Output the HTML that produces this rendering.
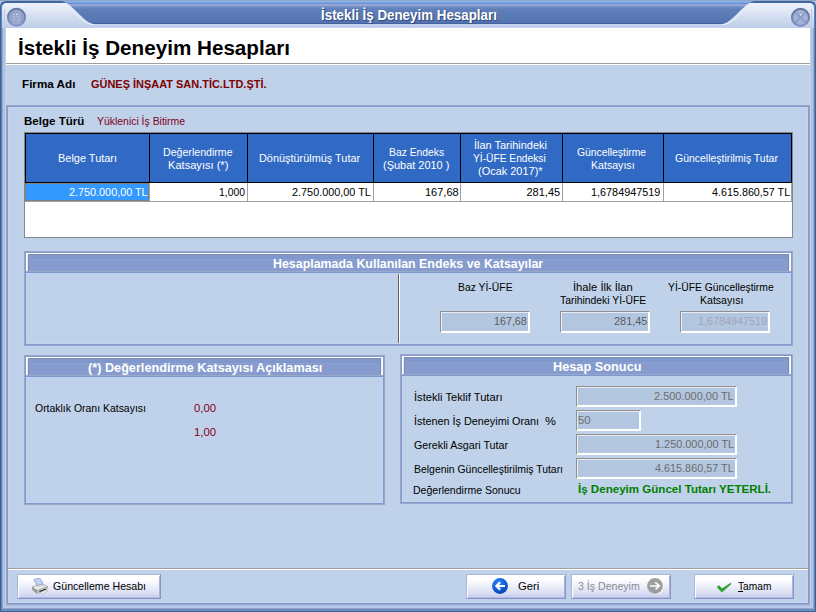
<!DOCTYPE html>
<html><head><meta charset="utf-8"><title>İstekli İş Deneyim Hesapları</title>
<style>
html,body{margin:0;padding:0}
body{width:816px;height:612px;position:relative;overflow:hidden;background:#bfd2e9;font-family:"Liberation Sans",sans-serif}
div,span,svg{position:absolute;box-sizing:border-box}
.t{white-space:pre;transform-origin:0 0;display:block}
.fr{border:1px solid #9aa7ca}
.fr>i{position:absolute;left:0;top:0;right:0;bottom:0;border:1px solid #8099cf;display:block;box-shadow:inset 0 0 0 1px #c4d6ed}
.ph{background:linear-gradient(#8198cc 0,#8198cc 5px,#8ca1d1 5px,#8ca1d1 6px,#869cce 6px);border:1px solid #fff;border-bottom:none;box-shadow:inset 1px 0 0 #e6ebf6,inset -1px 0 0 #e6ebf6,inset 2px 1px 0 #7e8cb4,inset -2px 0 0 #7e8cb4}
.pl{height:2px;background:#7d97cf;border-top:1px solid #9ba8c7}
.ed{background:#b3c6e0;border:1px solid;border-color:#909090 #fff #fff #909090;box-shadow:inset 1px 1px 0 #e6ebf4, inset -1px -1px 0 #fff}
.btn{border:1px solid #a9b7d3;border-right-color:#8a95c8;border-bottom-color:#8591c5;background:linear-gradient(#ffffff 0%,#fdfdff 20%,#eceef9 52%,#d9ddf3 80%,#c8ceee 96%,#9fa9d7 100%);box-shadow:inset 1px 1px 0 #fff, inset -1px 0 0 #aab3dc}
.hc{background:#316ac5;border:1px solid #000;top:133px;height:50px}
.gc{top:183px;height:19px;border-right:1px solid #a0a0a0;border-bottom:1px solid #a0a0a0;background:#fff}

</style></head>
<body>
<!-- title bar -->
<svg width="816" height="28" style="left:0;top:0" viewBox="0 0 816 28">
 <defs>
  <linearGradient id="tl" x1="0" y1="0" x2="0" y2="1"><stop offset="0" stop-color="#eef2fa"/><stop offset="0.35" stop-color="#dfe6f5"/><stop offset="1" stop-color="#bccde9"/></linearGradient>
  <linearGradient id="td" gradientUnits="userSpaceOnUse" x1="0" y1="1" x2="0" y2="24">
   <stop offset="0" stop-color="#8ab4ea"/><stop offset="0.043" stop-color="#8ab4ea"/>
   <stop offset="0.065" stop-color="#7ba3de"/><stop offset="0.11" stop-color="#6f93d0"/>
   <stop offset="0.14" stop-color="#8da4d6"/><stop offset="0.20" stop-color="#94a8d8"/>
   <stop offset="0.24" stop-color="#7690c8"/><stop offset="0.30" stop-color="#6785c0"/>
   <stop offset="0.36" stop-color="#5f7fba"/><stop offset="0.93" stop-color="#5575b0"/>
   <stop offset="0.96" stop-color="#4a66a6"/><stop offset="1" stop-color="#3f5a9c"/>
  </linearGradient>
  <linearGradient id="tb" x1="0" y1="0" x2="0" y2="1"><stop offset="0" stop-color="#cad3f0"/><stop offset="0.8" stop-color="#bfc9ea"/><stop offset="1" stop-color="#d8def2"/></linearGradient>
 </defs>
 <rect x="0" y="0" width="816" height="28" fill="#b4c2d8"/>
 <path d="M0 28 V7 Q0 1 6 1 H810 Q816 1 816 7 V28 Z" fill="#3f679f"/>
 <path d="M1 28 V8 Q1 3 6 3 H810 Q815 3 815 8 V28 Z" fill="#6585b9"/>
 <path d="M2 28 V8 Q2 3 7 3 H809 Q814 3 814 8 V28 Z" fill="url(#tl)"/>
 <path d="M4.5 9 V28 M811.5 9 V28" stroke="#c0cbe3" stroke-width="1" fill="none"/>
 <rect x="90" y="24" width="636" height="4" fill="url(#tb)"/>
 <rect x="0" y="0" width="816" height="1" fill="#8fa6c9"/>
 <path d="M61 1 H755 C746 1 731 24 722 24 H94 C85 24 70 1 61 1 Z" fill="url(#td)"/>
 <path d="M67 4.6 C73 9 83 24.7 94 24.7 M749 4.6 C743 9 733 24.7 722 24.7" fill="none" stroke="#e9edf8" stroke-width="1.1"/>
 <!-- left icon -->
 <linearGradient id="rg" x1="0" y1="0" x2="0" y2="1"><stop offset="0" stop-color="#606f95"/><stop offset="1" stop-color="#7f95ca"/></linearGradient>
 <circle cx="16.5" cy="17.2" r="8.6" fill="#95a4cc" stroke="url(#rg)" stroke-width="1.8"/>
 <circle cx="16.5" cy="17.2" r="7.2" fill="none" stroke="#8d9bc2" stroke-width="0.9"/>
 <rect x="13" y="13.8" width="7" height="7.4" fill="#aab7db"/><rect x="16" y="13.9" width="1.2" height="1" fill="#fff"/>
 <path d="M14 15.5h5M14 17.5h5M14 19.5h5" stroke="#8f9dc7" stroke-width="1"/>
 <path d="M12.5 22.6 Q16.5 24.6 20.5 22.6" stroke="#a9b6da" stroke-width="0.8" fill="none"/>
 <!-- close -->
 <circle cx="800.5" cy="17.4" r="8.5" fill="#a3b1d8" stroke="#7684aa" stroke-width="1.7"/>
 <path d="M795 12 L806 23 M806 12 L795 23" stroke="#8b99c4" stroke-width="1.7"/>
 <circle cx="800.5" cy="17.4" r="8.5" fill="none" stroke="url(#rg)" stroke-width="1.8"/>
 <rect x="800" y="14.2" width="1.2" height="1.2" fill="#fff"/>
</svg>
<!-- window side/bottom borders -->
<div style="left:0;top:28px;width:816px;height:584px;border:1px solid #3a6399;border-top:none"></div>
<div style="left:1px;top:28px;width:814px;height:583px;border:1px solid #5f80b5;border-top:none;border-bottom:2px solid #6a8dc1"></div>
<div style="left:2px;top:28px;width:812px;height:581px;border:1px solid #99a8c8;border-top:none;border-bottom-color:#93a4c6"></div>
<div style="left:3px;top:28px;width:810px;height:580px;border:1px solid #b5c8ec;border-top:none;border-bottom:2px solid #b8c9ec"></div>
<div style="left:4px;top:28px;width:808px;height:578px;border:1px solid #b0beda;border-top:none"></div>
<!-- white header -->
<div style="left:6px;top:28px;width:804px;height:35px;background:#fff"></div>
<div style="left:6px;top:63px;width:804px;height:1px;background:#9e9e9e"></div>
<div style="left:6px;top:64px;width:804px;height:1px;background:#fff"></div>
<!-- main group frame -->
<div class="fr" style="left:6px;top:105px;width:804px;height:500px"><i></i></div>
<!-- grid -->
<div style="left:24px;top:132px;width:769px;height:106px;background:#fff;border:1px solid #828790"></div>
<div class="hc" style="left:25px;width:125px"></div>
<div class="hc" style="left:149px;width:99px"></div>
<div class="hc" style="left:247px;width:127px"></div>
<div class="hc" style="left:373px;width:88px"></div>
<div class="hc" style="left:460px;width:103px"></div>
<div class="hc" style="left:562px;width:102px"></div>
<div class="hc" style="left:663px;width:129px"></div>
<div class="gc" style="left:25px;width:125px"></div>
<div style="left:25px;top:183px;width:124px;height:18px;background:#3399ff;border:1px dotted #cc6600"></div>
<div class="gc" style="left:150px;width:98px"></div>
<div class="gc" style="left:248px;width:126px"></div>
<div class="gc" style="left:374px;width:87px"></div>
<div class="gc" style="left:461px;width:102px"></div>
<div class="gc" style="left:563px;width:101px"></div>
<div class="gc" style="left:664px;width:128px"></div>
<!-- panel 1 -->
<div class="fr" style="left:24px;top:251px;width:769px;height:95px"><i></i></div>
<div class="ph" style="left:26px;top:253px;width:765px;height:18px"></div>
<div class="pl" style="left:26px;top:271px;width:765px"></div>
<div style="left:398px;top:274px;width:1px;height:69px;background:#606060"></div>
<div style="left:399px;top:274px;width:1px;height:69px;background:#fff"></div>
<div class="ed" style="left:440px;top:311px;width:90px;height:22px"></div>
<div class="ed" style="left:560px;top:311px;width:90px;height:22px"></div>
<div class="ed" style="left:680px;top:311px;width:90px;height:22px"></div>
<!-- panel 2 -->
<div class="fr" style="left:24px;top:355px;width:361px;height:150px"><i></i></div>
<div class="ph" style="left:26px;top:357px;width:357px;height:18px"></div>
<div class="pl" style="left:26px;top:375px;width:357px"></div>
<!-- panel 3 -->
<div class="fr" style="left:400px;top:354px;width:393px;height:150px"><i></i></div>
<div class="ph" style="left:402px;top:356px;width:389px;height:18px"></div>
<div class="pl" style="left:402px;top:374px;width:389px"></div>
<div class="ed" style="left:576px;top:386px;width:161px;height:21px"></div>
<div class="ed" style="left:576px;top:410px;width:65px;height:21px"></div>
<div class="ed" style="left:576px;top:434px;width:161px;height:21px"></div>
<div class="ed" style="left:576px;top:458px;width:161px;height:21px"></div>
<!-- bottom separator -->
<div style="left:8px;top:568px;width:800px;height:1px;background:#a0a0a0"></div>
<div style="left:8px;top:569px;width:800px;height:1px;background:#fff"></div>
<!-- buttons -->
<div class="btn" style="left:17px;top:574px;width:144px;height:25px"></div>
<div class="btn" style="left:466px;top:574px;width:100px;height:25px"></div>
<div class="btn" style="left:571px;top:574px;width:100px;height:25px"></div>
<div class="btn" style="left:694px;top:574px;width:100px;height:25px"></div>
<!-- printer icon -->
<svg width="16" height="16" viewBox="0 0 16 16" style="left:32px;top:578px">
 <polygon points="2,1.6 5.8,0.4 8.2,0.4 9,2.6 10,3 10.8,6.4 4.6,8.2 3.6,4 2.6,3.6" fill="#b9d6f5" stroke="#9a9be0" stroke-width="0.8"/>
 <polygon points="0.4,9.2 4.2,7.6 10.8,6.2 15.6,8.6 5,12.6" fill="#eeeeee" stroke="#8e8e8e" stroke-width="0.7"/>
 <polygon points="4.6,8.2 10.6,6.6 12.4,7.6 6,9.4" fill="#cfd3dc"/>
 <polygon points="0.4,9.2 5,12.6 5,15.6 0.4,11.8" fill="#a2a2a2" stroke="#808080" stroke-width="0.5"/>
 <polygon points="5,12.6 15.6,8.6 15.6,11 5,15.6" fill="#d2d2d2" stroke="#8e8e8e" stroke-width="0.5"/>
 <polygon points="7.4,12.9 14,10.4 14,11.6 7.4,14.2" fill="#111"/>
 <polygon points="8.2,14.4 13,12.4 15.8,13.4 10.6,15.7" fill="#f2f2f2" stroke="#a8a8a8" stroke-width="0.5"/>
</svg>
<!-- back icon -->
<svg width="16" height="16" viewBox="0 0 16 16" style="left:492px;top:578px">
 <defs><radialGradient id="bk" cx="0.4" cy="0.3" r="0.75"><stop offset="0" stop-color="#2f86f2"/><stop offset="0.6" stop-color="#0b5fdc"/><stop offset="1" stop-color="#083c9e"/></radialGradient></defs>
 <circle cx="8" cy="8" r="7.9" fill="url(#bk)"/>
 <path d="M2.8 7.9 L7.4 3.6 L8.9 5.1 L7.1 6.9 H13 V9.1 H7.1 L8.9 10.9 L7.4 12.4 Z" fill="#fff"/>
</svg>
<!-- next icon (disabled) -->
<svg width="17" height="17" viewBox="0 0 17 17" style="left:647px;top:578px">
 <circle cx="8.6" cy="8.6" r="7.9" fill="#fff"/>
 <circle cx="8" cy="8" r="7.9" fill="#9e9e9e"/>
 <path d="M3 7.9 H12.4 M8.2 4.4 L12.4 7.9 L8.6 11.4" fill="none" stroke="#fff" stroke-width="1.5"/>
</svg>
<!-- check icon -->
<svg width="16" height="12" viewBox="0 0 16 12" style="left:716px;top:582px">
 <path d="M1.2 5.3 L2.8 3.6 L6 6.8 L14.4 1.3 L15.2 1.7 L6.4 9.8 L5.5 9.8 Z" fill="#27ad27" stroke="#0f7f0f" stroke-width="0.5"/>
</svg>

<span class="t" style="left:321.05px;top:8px;font:700 14px/14px 'Liberation Sans', sans-serif;color:#fff;transform:scaleX(0.9536);text-shadow:1px 1px 1px #2a4478;">İstekli İş Deneyim Hesapları</span>
<span class="t" style="left:17.97px;top:38px;font:700 20px/20px 'Liberation Sans', sans-serif;color:#000;transform:scaleX(1.0322);">İstekli İş Deneyim Hesapları</span>
<span class="t" style="left:22.24px;top:79px;font:700 11px/11px 'Liberation Sans', sans-serif;color:#000;transform:scaleX(1.0612);">Firma Adı</span>
<span class="t" style="left:91.20px;top:79px;font:700 11px/11px 'Liberation Sans', sans-serif;color:#800000;transform:scaleX(0.9960);">GÜNEŞ İNŞAAT SAN.TİC.LTD.ŞTİ.</span>
<span class="t" style="left:24.15px;top:116px;font:700 11px/11px 'Liberation Sans', sans-serif;color:#000;transform:scaleX(1.0500);">Belge Türü</span>
<span class="t" style="left:97.05px;top:116px;font:400 11px/11px 'Liberation Sans', sans-serif;color:#800020;transform:scaleX(0.9478);">Yüklenici İş Bitirme</span>
<span class="t" style="left:57.75px;top:153px;font:400 11px/11px 'Liberation Sans', sans-serif;color:#fff;transform:scaleX(0.9956);">Belge Tutarı</span>
<span class="t" style="left:162.79px;top:147px;font:400 11px/11px 'Liberation Sans', sans-serif;color:#fff;transform:scaleX(0.9648);">Değerlendirme</span>
<span class="t" style="left:167.79px;top:160px;font:400 11px/11px 'Liberation Sans', sans-serif;color:#fff;transform:scaleX(1.0078);">Katsayısı (*)</span>
<span class="t" style="left:258.51px;top:153px;font:400 11px/11px 'Liberation Sans', sans-serif;color:#fff;transform:scaleX(0.9901);">Dönüştürülmüş Tutar</span>
<span class="t" style="left:388.56px;top:147px;font:400 11px/11px 'Liberation Sans', sans-serif;color:#fff;transform:scaleX(0.9386);">Baz Endeks</span>
<span class="t" style="left:383.00px;top:160px;font:400 11px/11px 'Liberation Sans', sans-serif;color:#fff;transform:scaleX(0.9962);">(Şubat 2010 )</span>
<span class="t" style="left:473.50px;top:140px;font:400 11px/11px 'Liberation Sans', sans-serif;color:#fff;transform:scaleX(0.9965);">İlan Tarihindeki</span>
<span class="t" style="left:473.07px;top:153px;font:400 11px/11px 'Liberation Sans', sans-serif;color:#fff;transform:scaleX(0.9286);">Yİ-ÜFE Endeksi</span>
<span class="t" style="left:478.25px;top:166px;font:400 11px/11px 'Liberation Sans', sans-serif;color:#fff;transform:scaleX(0.9961);">(Ocak 2017)*</span>
<span class="t" style="left:577.06px;top:147px;font:400 11px/11px 'Liberation Sans', sans-serif;color:#fff;transform:scaleX(0.9410);">Güncelleştirme</span>
<span class="t" style="left:590.79px;top:160px;font:400 11px/11px 'Liberation Sans', sans-serif;color:#fff;transform:scaleX(0.9640);">Katsayısı</span>
<span class="t" style="left:674.80px;top:153px;font:400 11px/11px 'Liberation Sans', sans-serif;color:#fff;transform:scaleX(0.9509);">Güncelleştirilmiş Tutar</span>
<span class="t" style="left:68.52px;top:187px;font:400 11px/11px 'Liberation Sans', sans-serif;color:#fff;transform:scaleX(0.9840);">2.750.000,00 TL</span>
<span class="t" style="left:218.56px;top:187px;font:400 11px/11px 'Liberation Sans', sans-serif;color:#000;transform:scaleX(0.9423);">1,000</span>
<span class="t" style="left:292.26px;top:187px;font:400 11px/11px 'Liberation Sans', sans-serif;color:#000;transform:scaleX(0.9872);">2.750.000,00 TL</span>
<span class="t" style="left:425.00px;top:187px;font:400 11px/11px 'Liberation Sans', sans-serif;color:#000;transform:scaleX(1.0000);">167,68</span>
<span class="t" style="left:526.50px;top:187px;font:400 11px/11px 'Liberation Sans', sans-serif;color:#000;transform:scaleX(1.0000);">281,45</span>
<span class="t" style="left:591.26px;top:187px;font:400 11px/11px 'Liberation Sans', sans-serif;color:#000;transform:scaleX(0.9855);">1,6784947519</span>
<span class="t" style="left:711.50px;top:187px;font:400 11px/11px 'Liberation Sans', sans-serif;color:#000;transform:scaleX(0.9778);">4.615.860,57 TL</span>
<span class="t" style="left:272.80px;top:257px;font:700 13px/13px 'Liberation Sans', sans-serif;color:#fff;transform:scaleX(0.9539);">Hesaplamada Kullanılan Endeks ve Katsayılar</span>
<span class="t" style="left:458.46px;top:282px;font:400 11px/11px 'Liberation Sans', sans-serif;color:#000;transform:scaleX(0.9429);">Baz Yİ-ÜFE</span>
<span class="t" style="left:572.98px;top:282px;font:400 11px/11px 'Liberation Sans', sans-serif;color:#000;transform:scaleX(1.0175);">İhale İlk İlan</span>
<span class="t" style="left:560.25px;top:295px;font:400 11px/11px 'Liberation Sans', sans-serif;color:#000;transform:scaleX(0.9423);">Tarihindeki Yİ-ÜFE</span>
<span class="t" style="left:668.06px;top:282px;font:400 11px/11px 'Liberation Sans', sans-serif;color:#000;transform:scaleX(0.9392);">Yİ-ÜFE Güncelleştirme</span>
<span class="t" style="left:699.79px;top:295px;font:400 11px/11px 'Liberation Sans', sans-serif;color:#000;transform:scaleX(0.9593);">Katsayısı</span>
<span class="t" style="left:494.42px;top:316px;font:400 11px/11px 'Liberation Sans', sans-serif;color:#5a5a5a;transform:scaleX(0.9750);">167,68</span>
<span class="t" style="left:613.81px;top:316px;font:400 11px/11px 'Liberation Sans', sans-serif;color:#5a5a5a;transform:scaleX(0.9938);">281,45</span>
<span class="t" style="left:697.77px;top:316px;font:400 11px/11px 'Liberation Sans', sans-serif;color:#9ca6b8;transform:scaleX(0.9819);">1,6784947519</span>
<span class="t" style="left:87.52px;top:361px;font:700 13px/13px 'Liberation Sans', sans-serif;color:#fff;transform:scaleX(0.9758);">(*) Değerlendirme Katsayısı Açıklaması</span>
<span class="t" style="left:35.05px;top:403px;font:400 11px/11px 'Liberation Sans', sans-serif;color:#000;transform:scaleX(0.9500);">Ortaklık Oranı Katsayısı</span>
<span class="t" style="left:194.00px;top:403px;font:400 11px/11px 'Liberation Sans', sans-serif;color:#800020;transform:scaleX(1.0238);">0,00</span>
<span class="t" style="left:193.97px;top:427px;font:400 11px/11px 'Liberation Sans', sans-serif;color:#800020;transform:scaleX(1.0250);">1,00</span>
<span class="t" style="left:552.52px;top:360px;font:700 13px/13px 'Liberation Sans', sans-serif;color:#fff;transform:scaleX(0.9801);">Hesap Sonucu</span>
<span class="t" style="left:413.99px;top:392px;font:400 11px/11px 'Liberation Sans', sans-serif;color:#000;transform:scaleX(1.0147);">İstekli Teklif Tutarı</span>
<span class="t" style="left:414.02px;top:416px;font:400 11px/11px 'Liberation Sans', sans-serif;color:#000;transform:scaleX(0.9840);">İstenen İş Deneyimi Oranı</span>
<span class="t" style="left:545.00px;top:416px;font:400 11px/11px 'Liberation Sans', sans-serif;color:#000;transform:scaleX(1.1111);">%</span>
<span class="t" style="left:414.03px;top:440px;font:400 11px/11px 'Liberation Sans', sans-serif;color:#000;transform:scaleX(0.9737);">Gerekli Asgari Tutar</span>
<span class="t" style="left:414.05px;top:464px;font:400 11px/11px 'Liberation Sans', sans-serif;color:#000;transform:scaleX(0.9484);">Belgenin Güncelleştirilmiş Tutarı</span>
<span class="t" style="left:412.79px;top:485px;font:400 11px/11px 'Liberation Sans', sans-serif;color:#000;transform:scaleX(0.9572);">Değerlendirme Sonucu</span>
<span class="t" style="left:654.20px;top:391px;font:400 11px/11px 'Liberation Sans', sans-serif;color:#6c6c6c;transform:scaleX(0.9974);">2.500.000,00 TL</span>
<span class="t" style="left:578.23px;top:415px;font:400 11px/11px 'Liberation Sans', sans-serif;color:#6c6c6c;transform:scaleX(1.0227);">50</span>
<span class="t" style="left:654.81px;top:439px;font:400 11px/11px 'Liberation Sans', sans-serif;color:#6c6c6c;transform:scaleX(0.9897);">1.250.000,00 TL</span>
<span class="t" style="left:655.20px;top:463px;font:400 11px/11px 'Liberation Sans', sans-serif;color:#6c6c6c;transform:scaleX(0.9848);">4.615.860,57 TL</span>
<span class="t" style="left:577.55px;top:484px;font:700 11px/11px 'Liberation Sans', sans-serif;color:#008000;transform:scaleX(1.0516);">İş Deneyim Güncel Tutarı YETERLİ.</span>
<span class="t" style="left:52.94px;top:581px;font:400 11px/11px 'Liberation Sans', sans-serif;color:#000;transform:scaleX(0.9632);">Güncelleme Hesabı</span>
<span class="t" style="left:518.47px;top:581px;font:400 11px/11px 'Liberation Sans', sans-serif;color:#000;transform:scaleX(1.0263);">Geri</span>
<span class="t" style="left:577.64px;top:581px;font:400 11px/11px 'Liberation Sans', sans-serif;color:#8a8a96;transform:scaleX(0.9619);">3 İş Deneyim</span>
<span class="t" style="left:738.00px;top:581px;font:400 11px/11px 'Liberation Sans', sans-serif;color:#000;transform:scaleX(0.9250);"><u>T</u>amam</span>
</body></html>
